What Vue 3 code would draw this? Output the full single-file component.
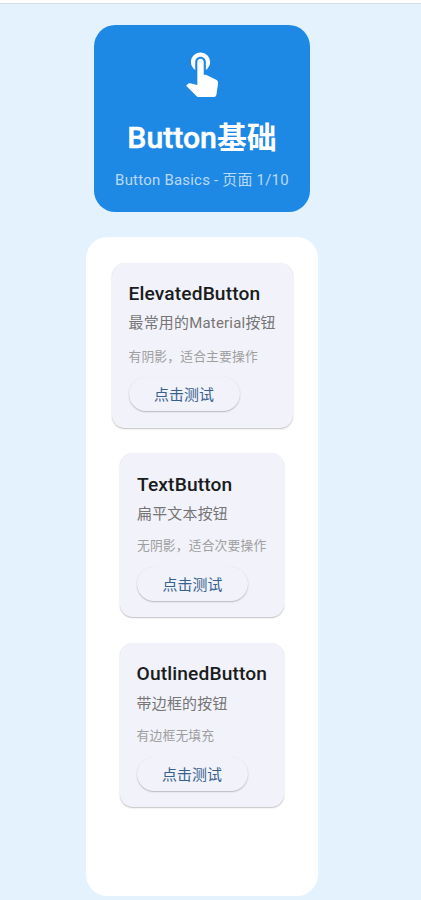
<script setup>
const cards = [
  { title: 'ElevatedButton', sub: '最常用的Material按钮', note: '有阴影，适合主要操作', size: 'first' },
  { title: 'TextButton', sub: '扁平文本按钮', note: '无阴影，适合次要操作', size: 'second' },
  { title: 'OutlinedButton', sub: '带边框的按钮', note: '有边框无填充', size: 'third' },
]
</script>

<template>
  <div class="page">
    <header class="hero">
      <svg class="touch" viewBox="0 0 24 24" fill="currentColor">
        <path d="M9 11.24V7.5C9 6.12 10.12 5 11.5 5S14 6.12 14 7.5v3.74c1.21-.81 2-2.18 2-3.74C16 5.01 13.99 3 11.5 3S7 5.01 7 7.5c0 1.56.79 2.93 2 3.74zm9.84 4.63l-4.54-2.26c-.17-.07-.35-.11-.54-.11H13v-6c0-.83-.67-1.5-1.5-1.5S10 6.67 10 7.5v10.74l-3.43-.72c-.08-.01-.15-.03-.24-.03-.31 0-.59.13-.79.33l-.79.8 4.94 4.94c.27.27.65.44 1.06.44h6.79c.75 0 1.33-.55 1.44-1.28l.75-5.27c.01-.07.02-.14.02-.2 0-.62-.38-1.16-.91-1.38z" />
      </svg>
      <h1><span>Button</span>基础</h1>
      <p>Button Basics - 页面 1/10</p>
    </header>
    <main class="panel">
      <section v-for="c in cards" :key="c.title" class="card" :class="c.size">
        <h2>{{ c.title }}</h2>
        <p class="sub">{{ c.sub }}</p>
        <p class="note">{{ c.note }}</p>
        <button type="button">点击测试</button>
      </section>
    </main>
  </div>
</template>

<style>
body {
  margin: 0;
  background: #e3f2fd;
}
</style>

<style scoped>
.page {
  box-sizing: border-box;
  height: 900px;
  overflow: hidden;
  border-top: 3px solid #fff;
  box-shadow: inset 0 1px 0 #d5dfe7;
  padding: 22.4px 17px 0 0;
  background: #e3f2fd;
  font-family: Roboto, "Noto Sans CJK SC", sans-serif;
  display: flex;
  flex-direction: column;
  align-items: center;
}
h1, h2, p {
  margin: 0;
  white-space: nowrap;
}
.hero {
  box-sizing: border-box;
  width: 215.6px;
  height: 186.2px;
  flex: none;
  padding-top: 20.6px;
  border-radius: 21.3px;
  background: #1e88e5;
  color: #fff;
  display: flex;
  flex-direction: column;
  align-items: center;
}
.touch {
  width: 51.2px;
  height: 51.2px;
}
.hero h1 {
  margin-top: 18.8px;
  font-size: 29.87px;
  line-height: 44px;
  font-weight: 700;
}
.hero h1 span {
  font-size: 30.2px;
  font-weight: 500;
  -webkit-text-stroke: 0.5px #fff;
}
.hero p {
  margin-top: 9px;
  font-size: 14.93px;
  line-height: 22px;
  letter-spacing: 0.24px;
  color: rgba(255, 255, 255, 0.7);
}
.panel {
  box-sizing: border-box;
  width: 232px;
  height: 659px;
  flex: none;
  margin-top: 25.4px;
  padding-top: 25.6px;
  border-radius: 21.3px;
  background: #fff;
  display: flex;
  flex-direction: column;
  align-items: center;
  gap: 25.3px;
}
.card {
  box-sizing: border-box;
  width: 164px;
  height: 164.4px;
  padding: 17.8px 17px 0;
  border-radius: 12.8px;
  background: #f2f2fa;
  box-shadow: 0 1px 1.5px rgba(0, 0, 0, 0.24), 0 0 1px rgba(0, 0, 0, 0.06);
  display: flex;
  flex-direction: column;
  align-items: flex-start;
}
.first {
  width: 181px;
  height: 165.2px;
  padding-top: 17.4px;
}
.third {
  width: 164.8px;
  padding-top: 17px;
}
.card h2 {
  font-size: 19.2px;
  line-height: 28px;
  font-weight: 500;
  letter-spacing: 0.13px;
  color: #191c20;
}
.sub {
  font-size: 14.93px;
  line-height: 22px;
  margin-top: 4px !important;
  letter-spacing: 0.24px;
  color: #757575;
}
.third .sub {
  margin-top: 5px !important;
}
.note {
  font-size: 12.8px;
  line-height: 18px;
  margin-top: 12.5px !important;
  letter-spacing: 0.14px;
  color: #9e9e9e;
}
.first .note {
  margin-top: 14px !important;
}
button {
  width: 111px;
  height: 34px;
  margin: 11.3px 0 0;
  padding: 2px 0 0;
  border: 0;
  border-radius: 17px;
  background: #f2f2fa;
  box-shadow: 0 1px 1.5px rgba(0, 0, 0, 0.24), 0 0 1px rgba(0, 0, 0, 0.05);
  color: #36618e;
  font: 400 14.93px/32px Roboto, "Noto Sans CJK SC", sans-serif;
  letter-spacing: 0.1px;
}
</style>
